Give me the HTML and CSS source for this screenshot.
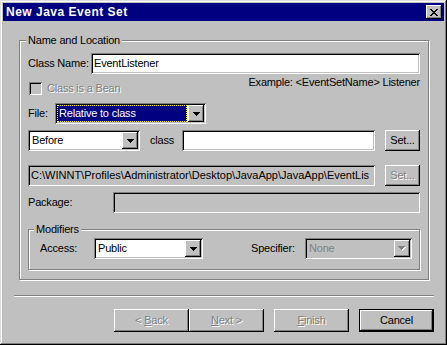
FILE: index.html
```html
<!DOCTYPE html>
<html>
<head>
<meta charset="utf-8">
<link rel="stylesheet" href="styles.css">
</head>
<body>
<div class="window">
  <div class="titlebar">
    <span class="title">New Java Event Set</span>
    <span class="close"><svg width="8" height="7" viewBox="0 0 8 7" shape-rendering="crispEdges"><path fill="#000" d="M0 0h2v1H0zM6 0h2v1H6zM1 1h2v1H1zM5 1h2v1H5zM2 2h4v1H2zM3 3h2v1H3zM2 4h4v1H2zM1 5h2v1H1zM5 5h2v1H5zM0 6h2v1H0zM6 6h2v1H6z"/></svg></span>
  </div>

  <div class="group group-main">
    <span class="legend">Name and Location</span>

    <div class="row">
      <span class="lbl w-classname">Class Name:</span>
      <div class="field grow"><span class="ftext">EventListener</span></div>
    </div>

    <div class="row r-check">
      <div class="check-wrap">
        <span class="checkbox"></span>
        <span class="lbl disabled">Class is a Bean</span>
      </div>
      <span class="lbl example">Example: &lt;EventSetName&gt; Listener</span>
    </div>

    <div class="row r-file">
      <span class="lbl w-file">File:</span>
      <div class="combo w-filecombo">
        <span class="value selected">Relative to class</span>
        <span class="drop"><svg width="7" height="4" viewBox="0 0 7 4" shape-rendering="crispEdges"><path fill="#000" d="M0 0h7v1H0zM1 1h5v1H1zM2 2h3v1H2zM3 3h1v1H3z"/></svg></span>
      </div>
    </div>

    <div class="row r-before">
      <div class="combo w-before">
        <span class="value">Before</span>
        <span class="drop"><svg width="7" height="4" viewBox="0 0 7 4" shape-rendering="crispEdges"><path fill="#000" d="M0 0h7v1H0zM1 1h5v1H1zM2 2h3v1H2zM3 3h1v1H3z"/></svg></span>
      </div>
      <span class="lbl w-classlbl">class</span>
      <div class="field grow"></div>
      <span class="btn btn-set"><span>Set...</span></span>
    </div>

    <div class="row r-path">
      <div class="field readonly grow"><span class="ftext path">C:\WINNT\Profiles\Administrator\Desktop\JavaApp\JavaApp\EventLis</span></div>
      <span class="btn btn-set disabled"><span>Set...</span></span>
    </div>

    <div class="row r-package">
      <span class="lbl w-package">Package:</span>
      <div class="field readonly grow"></div>
    </div>

    <div class="group group-mod">
      <span class="legend">Modifiers</span>
      <div class="row">
        <span class="lbl w-access">Access:</span>
        <div class="combo w-access-combo">
          <span class="value">Public</span>
          <span class="drop"><svg width="7" height="4" viewBox="0 0 7 4" shape-rendering="crispEdges"><path fill="#000" d="M0 0h7v1H0zM1 1h5v1H1zM2 2h3v1H2zM3 3h1v1H3z"/></svg></span>
        </div>
        <div class="spec">
          <span class="lbl w-spec">Specifier:</span>
          <div class="combo combo-disabled w-spec-combo">
            <span class="value disabled-plain">None</span>
            <span class="drop"><svg width="8" height="5" viewBox="0 0 8 5" shape-rendering="crispEdges"><path fill="#fff" d="M1 1h7v1H1zM2 2h5v1H2zM3 3h3v1H3zM4 4h1v1H4z"/><path fill="#808080" d="M0 0h7v1H0zM1 1h5v1H1zM2 2h3v1H2zM3 3h1v1H3z"/></svg></span>
          </div>
        </div>
      </div>
    </div>
  </div>

  <div class="sep"></div>

  <div class="buttons">
    <span class="btn btn-wide disabled"><span>&lt; <u>B</u>ack</span></span>
    <span class="btn btn-wide disabled"><span><u>N</u>ext &gt;</span></span>
    <span class="btn btn-wide disabled gap"><span><u>F</u>inish</span></span>
    <span class="btn btn-wide btn-default gap"><span>Cancel</span></span>
  </div>
</div>
</body>
</html>
```

FILE: styles.css
```css
* { box-sizing: border-box; }
html, body { margin: 0; padding: 0; }
body {
  width: 447px;
  height: 345px;
  overflow: hidden;
  background: #c0c0c0;
  font-family: "Liberation Sans", Arial, sans-serif;
  font-size: 11px;
  letter-spacing: -0.2px;
  color: #000;
}

.window {
  width: 447px;
  height: 345px;
  padding: 3px;
  background: #c0c0c0;
  box-shadow: inset -1px -1px #000, inset 1px 1px #dfdfdf, inset -2px -2px #808080, inset 2px 2px #fff;
  display: flex;
  flex-direction: column;
}

.titlebar {
  height: 18px;
  flex-shrink: 0;
  background: #000080;
  display: flex;
  align-items: center;
  justify-content: space-between;
  padding: 0 2px 0 3px;
}
.title {
  color: #fff;
  font-weight: bold;
  font-size: 12px;
  letter-spacing: 0.5px;
  line-height: 18px;
}
.close {
  width: 16px;
  height: 14px;
  background: #c0c0c0;
  box-shadow: inset -1px -1px #000, inset 1px 1px #fff, inset -2px -2px #808080;
  display: flex;
  align-items: center;
  justify-content: center;
}
.close svg { display: block; }

/* group boxes */
.group {
  position: relative;
  border: 1px solid #808080;
  box-shadow: inset 1px 1px #fff, 1px 1px #fff;
}
.legend {
  position: absolute;
  top: -7px;
  line-height: 13px;
  padding: 0 2px;
  background: #c0c0c0;
}
.group-main {
  margin: 19px 15px 0 16px;
  padding: 12px 8px 9px 8px;
}
.group-main > .legend { left: 6px; }
.group-mod {
  margin-top: 16px;
  padding: 8px 7px 10px 11px;
}
.group-mod > .legend { left: 5px; }

/* rows */
.row { display: flex; align-items: center; }
.lbl { line-height: 13px; flex-shrink: 0; white-space: nowrap; }
.grow { flex: 1; min-width: 0; }

.w-classname { width: 63px; }
.w-file { width: 27px; }
.w-classlbl { width: 32px; margin-left: 10px; }
.w-package { width: 85px; }
.w-access { width: 54px; }
.w-spec { width: 54px; }

.r-check { align-items: flex-start; margin-top: 2px; }
.check-wrap { display: flex; align-items: center; margin-top: 6px; margin-left: 1px; }
.example { margin-left: auto; }
.r-file { margin-top: 8px; }
.r-before { margin-top: 6px; }
.r-path { margin-top: 14px; }
.r-package { margin-top: 6px; }

.disabled { color: #808080; text-shadow: 1px 1px 0 #fff; }
.disabled-plain { color: #808080; }

.checkbox {
  width: 13px;
  height: 13px;
  background: #c0c0c0;
  box-shadow: inset 1px 1px #808080, inset -1px -1px #fff, inset 2px 2px #000, inset -2px -2px #c0c0c0;
  margin-right: 5px;
}

/* edit fields */
.field {
  height: 21px;
  background: #fff;
  box-shadow: inset 1px 1px #808080, inset -1px -1px #fff, inset 2px 2px #000, inset -2px -2px #c0c0c0;
  padding: 2px;
}
.field.readonly { background: #c0c0c0; }
.ftext {
  display: block;
  padding-left: 1px;
  line-height: 17px;
  white-space: nowrap;
  overflow: hidden;
}
.ftext.path { letter-spacing: 0; }

/* combos */
.combo {
  height: 21px;
  flex-shrink: 0;
  display: flex;
  background: #fff;
  box-shadow: inset 1px 1px #808080, inset -1px -1px #fff, inset 2px 2px #000, inset -2px -2px #c0c0c0;
  padding: 2px;
}
.combo .value {
  flex: 1;
  min-width: 0;
  line-height: 17px;
  padding-left: 2px;
  white-space: nowrap;
  overflow: hidden;
}
.combo .value.selected {
  background: #000080;
  color: #fff;
  border: 1px dotted #ffff00;
  line-height: 15px;
  padding-left: 1px;
  margin-right: 1px;
}
.combo .drop {
  width: 16px;
  height: 17px;
  flex-shrink: 0;
  background: #c0c0c0;
  box-shadow: inset -1px -1px #000, inset 1px 1px #fff, inset -2px -2px #808080;
  display: flex;
  align-items: center;
  justify-content: center;
}
.combo .drop svg { display: block; }
.combo-disabled { background: #c0c0c0; }

.w-filecombo { width: 151px; }
.w-before { width: 112px; }
.w-access-combo { width: 109px; }
.w-spec-combo { width: 107px; }

.spec { margin-left: auto; display: flex; align-items: center; }

/* buttons */
.btn {
  height: 21px;
  flex-shrink: 0;
  display: flex;
  align-items: center;
  justify-content: center;
  background: #c0c0c0;
  box-shadow: inset -1px -1px #000, inset 1px 1px #fff, inset -2px -2px #808080;
  line-height: 13px;
  white-space: nowrap;
}
.btn > span { white-space: pre; }
.btn-set { width: 35px; margin-left: 10px; }
.btn-wide { width: 75px; height: 23px; }
.btn-default { border: 1px solid #000; }
.gap { margin-left: 10px; }
.btn u { text-decoration: underline; }

.sep {
  flex-shrink: 0;
  height: 2px;
  margin: 15px 10px 0 11px;
  border-top: 1px solid #808080;
  border-bottom: 1px solid #fff;
}

.buttons {
  display: flex;
  justify-content: flex-end;
  margin: 12px 10px 0 0;
}
```
